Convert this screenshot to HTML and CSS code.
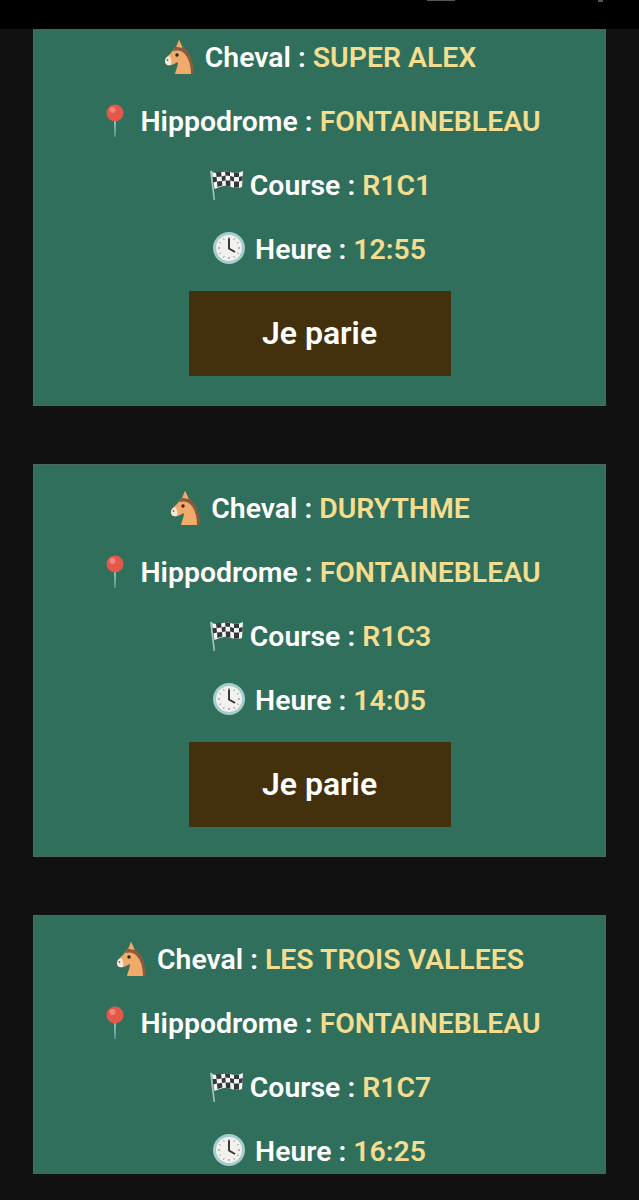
FILE: index.html
```html
<!DOCTYPE html>
<html lang="fr">
<head>
    <meta charset="UTF-8">
    <meta name="viewport" content="width=device-width, initial-scale=1.0">
    <title>Paris du jour</title>
    <link rel="stylesheet" href="styles.css">
</head>
<body>
    <svg class="defs" width="0" height="0" aria-hidden="true">
        <symbol id="horse" viewBox="-4 0 37 36">
            <path d="M14 1 L18 9 C24 13 28 22 28 35 L10 35 C11 30 13 27 13 23 C10 24 8 26 5 26 C2 27 0 25 0 22 C0 19 3 17 6 14 C8 11 10 9 11 8 Z" fill="#f0ab6b"/>
            <path d="M18 8 C24 12 29 22 28.500 35 L26 35 C26 25 23 18 19 14 C16 11 12 11 8 12 C9 10 10 9 11 8 C13 7 16 7 18 8 Z" fill="#8a5a3e"/>
            <path d="M14 1 L17.500 9 L12 8 Z" fill="#f0ab6b"/>
            <path d="M0 22 C0 19 2 18 4 17 C6 19 7 23 6 26 C2 27 0 25 0 22 Z" fill="#f7e8da"/>
            <circle cx="12" cy="16" r="1.700" fill="#33251c"/>
            <circle cx="2.500" cy="21" r="0.900" fill="#8a5a3e"/>
        </symbol>
        <symbol id="pin" viewBox="-1 0 37 36">
            <path d="M17 18 L19 18 L18.400 34 L17.600 34 Z" fill="#8fc3c4"/>
            <circle cx="18" cy="10" r="8.500" fill="#e5574b"/>
            <circle cx="15.500" cy="7" r="3" fill="#f0877c"/>
        </symbol>
        <symbol id="flag" viewBox="-1 0 37 36">
            <g transform="translate(3 2)">
                <path d="M0 2 L2 1.500 L5 31 L3.500 31 Z" fill="#a9c3bb"/>
                <path d="M2 3 C8 6 14 1 20 3 C25 4.500 29 4 33 2 L32 18 C27 20 22 18 17 17 C12 16 9 19 4.500 20 Z" fill="#f4f4f4"/>
                <path d="M6 3.600 L11 3 L11.600 7.500 L6.600 8 Z M15 2.200 L20 2.800 L20 7 L15.500 6.600 Z M24 3.800 L29 3.800 L29 8 L24 8 Z M2.600 8 L6.600 8 L7 12.600 L3.200 13.600 Z M11.600 7.500 L15.500 6.600 L15.600 11.400 L12 12 Z M20 7 L24 8 L24 12.400 L20.200 11.600 Z M29 8 L32.600 7 L32.400 11.600 L29 12.600 Z M7 12.600 L12 12 L12.400 16.600 L7.400 18 Z M15.600 11.400 L20.200 11.600 L20.400 17.800 L16 16.800 Z M24 12.400 L29 12.600 L29 18.600 L24 18.800 Z" fill="#33383a"/>
            </g>
        </symbol>
        <symbol id="clock" viewBox="0 0 37 36">
            <circle cx="18" cy="17" r="16" fill="#a5cdd0"/>
            <circle cx="18" cy="17" r="13" fill="#f3f1ee"/>
            <path d="M18 6 V8 M18 26 V28 M7 17 H9 M27 17 H29 M12.500 7.500 L13.200 8.700 M23.500 7.500 L22.800 8.700 M12.500 26.500 L13.200 25.300 M23.500 26.500 L22.800 25.300 M8.500 11.500 L9.700 12.200 M27.500 11.500 L26.300 12.200 M8.500 22.500 L9.700 21.800 M27.500 22.500 L26.300 21.800" stroke="#77787a" stroke-width="1"/>
            <path d="M18 7.500 V17.500 L24 21" fill="none" stroke="#33302e" stroke-width="1.900"/>
        </symbol>
    </svg>

    <div class="status-bar">
        <span class="status-bit status-bit-wide"></span>
        <span class="status-bit status-bit-small"></span>
    </div>

    <div class="viewport">
        <div class="card-list">
            <div class="card">
                <p class="row"><svg class="emoji"><use href="#horse"/></svg> Cheval : <span class="value">SUPER ALEX</span></p>
                <p class="row"><svg class="emoji"><use href="#pin"/></svg> Hippodrome : <span class="value">FONTAINEBLEAU</span></p>
                <p class="row"><svg class="emoji"><use href="#flag"/></svg> Course : <span class="value">R1C1</span></p>
                <p class="row"><svg class="emoji"><use href="#clock"/></svg> Heure : <span class="value">12:55</span></p>
                <a class="btn" href="#">Je parie</a>
            </div>
            <div class="card">
                <p class="row"><svg class="emoji"><use href="#horse"/></svg> Cheval : <span class="value">DURYTHME</span></p>
                <p class="row"><svg class="emoji"><use href="#pin"/></svg> Hippodrome : <span class="value">FONTAINEBLEAU</span></p>
                <p class="row"><svg class="emoji"><use href="#flag"/></svg> Course : <span class="value">R1C3</span></p>
                <p class="row"><svg class="emoji"><use href="#clock"/></svg> Heure : <span class="value">14:05</span></p>
                <a class="btn" href="#">Je parie</a>
            </div>
            <div class="card">
                <p class="row"><svg class="emoji"><use href="#horse"/></svg> Cheval : <span class="value">LES TROIS VALLEES</span></p>
                <p class="row"><svg class="emoji"><use href="#pin"/></svg> Hippodrome : <span class="value">FONTAINEBLEAU</span></p>
                <p class="row"><svg class="emoji"><use href="#flag"/></svg> Course : <span class="value">R1C7</span></p>
                <p class="row"><svg class="emoji"><use href="#clock"/></svg> Heure : <span class="value">16:25</span></p>
            </div>
        </div>
    </div>
</body>
</html>
```

FILE: styles.css
```css
html, body {
    margin: 0;
    height: 1200px;
    overflow: hidden;
}
body {
    font-family: Roboto, "Liberation Sans", sans-serif;
    background-color: #111111;
    color: #ffffff;
}
.defs {
    display: block;
    height: 0;
}
.status-bar {
    height: 29px;
    background: #000000;
    position: relative;
}
.status-bit {
    position: absolute;
    top: 0;
    height: 1px;
    background: #555555;
}
.status-bit-wide {
    left: 427px;
    width: 28px;
}
.status-bit-small {
    left: 598px;
    width: 5px;
    height: 2px;
}
.viewport {
    height: 1145px;
    overflow: hidden;
}
.card-list {
    display: flex;
    flex-direction: column;
    gap: 58px;
    margin-top: -16px;
    padding: 0 33px;
}
.card {
    background: #2f6f5c;
    border: 1px solid #4a6a60;
    height: 393px;
    box-sizing: border-box;
    padding: 25px 0 0;
    text-align: center;
}
.row {
    margin: 0 0 32px;
    height: 32px;
    line-height: 32px;
    font-size: 28.4px;
    font-weight: 600;
    white-space: nowrap;
}
.value {
    color: #f4dd8e;
}
.emoji {
    width: 37px;
    height: 36px;
    margin-left: -2px;
    vertical-align: -8px;
}
.btn {
    display: block;
    width: 262px;
    height: 85px;
    line-height: 85px;
    margin: -4px auto 0;
    background: #42310c;
    color: #ffffff;
    font-size: 32px;
    font-weight: 600;
    text-decoration: none;
    text-align: center;
}
```
